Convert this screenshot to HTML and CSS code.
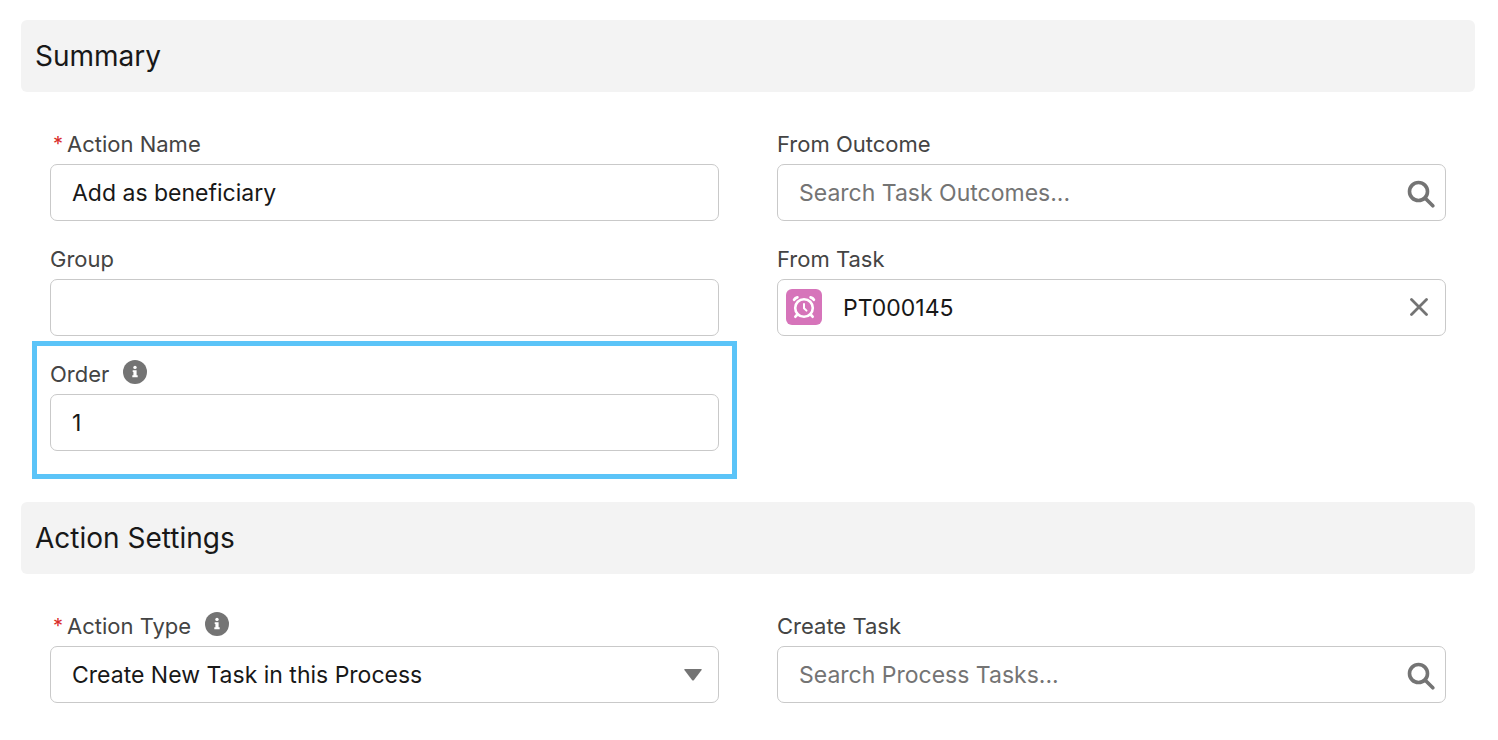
FILE: index.html
```html
<!DOCTYPE html>
<html lang="en">
<head>
<meta charset="utf-8">
<title>Action</title>
<link rel="stylesheet" href="styles.css">
</head>
<body>
<svg class="sprite" aria-hidden="true">
  <symbol id="search" viewBox="0 0 28 28">
    <circle cx="11.5" cy="11.5" r="9" fill="none" stroke="currentColor" stroke-width="3.6"/>
    <path d="M18 18l7.8 7.8" fill="none" stroke="currentColor" stroke-width="3.6" stroke-linecap="round"/>
  </symbol>
  <symbol id="info" viewBox="0 0 24 24">
    <circle cx="12" cy="12" r="12" fill="currentColor"/>
    <circle cx="12" cy="7.4" r="1.7" fill="#fff"/>
    <path d="M9.7 10.2h3.9v5.1h1.1v1.9H9.3v-1.9h1.1v-3.2h-.7z" fill="#fff"/>
  </symbol>
</svg>
<form class="form">
  <section>
    <h2 class="section-title">Summary</h2>
    <div class="fields">
      <div class="field">
        <div class="label-row"><span class="required">*</span><label for="name">Action Name</label></div>
        <input class="control" id="name" type="text" value="Add as beneficiary" required>
      </div>
      <div class="field">
        <div class="label-row"><label for="outcome">From Outcome</label></div>
        <div class="lookup">
          <input class="control" id="outcome" type="text" placeholder="Search Task Outcomes...">
          <svg class="search-icon" aria-hidden="true"><use href="#search"/></svg>
        </div>
      </div>
      <div class="field">
        <div class="label-row"><label for="group">Group</label></div>
        <input class="control" id="group" type="text">
      </div>
      <div class="field">
        <div class="label-row"><label for="task">From Task</label></div>
        <div class="lookup">
          <svg class="task-icon" viewBox="0 0 36 36" aria-hidden="true">
            <rect width="36" height="36" rx="6" fill="#d674ba"/>
            <g fill="none" stroke="#fff" stroke-linecap="round" stroke-linejoin="round">
              <circle cx="18" cy="19" r="8.8" stroke-width="2.6"/>
              <path d="M18 15v4.2l2.5 2.4" stroke-width="2"/>
              <path d="M8.1 10.8Q9.2 8.9 11.4 8.4M27.9 10.8Q26.8 8.9 24.6 8.4" stroke-width="2.7"/>
              <path d="M11.4 25.5L9.4 27.7M24.6 25.5l2 2.2" stroke-width="2.7"/>
            </g>
          </svg>
          <input class="control selected-record" id="task" type="text" value="PT000145" readonly>
          <button class="clear" type="button" aria-label="Clear selection">
            <svg class="clear-icon" viewBox="0 0 18 18" aria-hidden="true"><path d="M1.5 1.5l15 15M16.5 1.5l-15 15" fill="none" stroke="currentColor" stroke-width="2.8" stroke-linecap="round"/></svg>
          </button>
        </div>
      </div>
      <div class="field highlighted">
        <div class="label-row"><label for="order">Order</label><button class="help" type="button" aria-label="Help for Order"><svg class="info-icon" aria-hidden="true"><use href="#info"/></svg></button></div>
        <input class="control" id="order" type="text" inputmode="numeric" value="1">
      </div>
    </div>
  </section>
  <section>
    <h2 class="section-title">Action Settings</h2>
    <div class="fields">
      <div class="field">
        <div class="label-row"><span class="required">*</span><label for="type">Action Type</label><button class="help" type="button" aria-label="Help for Action Type"><svg class="info-icon" aria-hidden="true"><use href="#info"/></svg></button></div>
        <div class="lookup">
          <select class="control" id="type"><option>Create New Task in this Process</option></select>
          <svg class="arrow-icon" viewBox="0 0 18 12" aria-hidden="true"><path d="M1 0h16q1.4 0 .6 1.1L10 11q-1 1.2-2 0L.4 1.1Q-.4 0 1 0z" fill="currentColor"/></svg>
        </div>
      </div>
      <div class="field">
        <div class="label-row"><label for="create">Create Task</label></div>
        <div class="lookup">
          <input class="control" id="create" type="text" placeholder="Search Process Tasks...">
          <svg class="search-icon" aria-hidden="true"><use href="#search"/></svg>
        </div>
      </div>
    </div>
  </section>
</form>
</body>
</html>
```
FILE: styles.css
```css
* { box-sizing: border-box; }
body {
  margin: 0;
  background: #fff;
  color: #181818;
  font-family: Inter, "Liberation Sans", sans-serif;
}
.sprite { position: absolute; width: 0; height: 0; }
.form { padding: 20px 23px 0 21px; }
.section-title {
  margin: 0;
  padding: 16px 14px;
  border-radius: 6px;
  background: #f3f3f3;
  font-size: 28px;
  line-height: 40px;
  font-weight: 400;
}
.fields {
  display: grid;
  grid-template-columns: 1fr 1fr;
  gap: 22px 58px;
  padding: 36px 29px 51px;
}
.field { min-width: 0; }
.label-row {
  display: flex;
  align-items: center;
  margin-bottom: 4px;
  color: #444;
  font-size: 22px;
  line-height: 32px;
}
.required { margin: 0 4px 0 3px; color: #d92b2b; font-size: 20px; }
.help {
  display: flex;
  margin: 0 0 4px 14px;
  padding: 0;
  border: 0;
  background: none;
  color: #747474;
}
.info-icon { width: 24px; height: 24px; }
.control {
  display: block;
  width: 100%;
  height: 57px;
  padding: 0 21px;
  border: 1px solid #c9c9c9;
  border-radius: 7px;
  background: #fff;
  color: #181818;
  font-family: inherit;
  font-size: 23px;
  appearance: none;
}
.control::placeholder { color: #747474; opacity: 1; }
.lookup { position: relative; color: #747474; }
.lookup .control { padding-right: 56px; }
.lookup .selected-record { padding-left: 65px; }
.search-icon {
  position: absolute;
  top: 16px;
  right: 11px;
  width: 28px;
  height: 28px;
}
.task-icon {
  position: absolute;
  top: 10px;
  left: 9px;
  width: 36px;
  height: 36px;
}
.clear {
  position: absolute;
  top: 12px;
  right: 11px;
  display: grid;
  place-items: center;
  width: 32px;
  height: 32px;
  padding: 0;
  border: 0;
  background: none;
  color: #747474;
}
.clear-icon { width: 18px; height: 18px; }
.arrow-icon {
  position: absolute;
  top: 23px;
  right: 17px;
  width: 18px;
  height: 12px;
  pointer-events: none;
}
.highlighted { position: relative; }
.highlighted::after {
  content: "";
  position: absolute;
  inset: -17px -18px -28px;
  border: 5px solid #5bc4f8;
  pointer-events: none;
}
```
